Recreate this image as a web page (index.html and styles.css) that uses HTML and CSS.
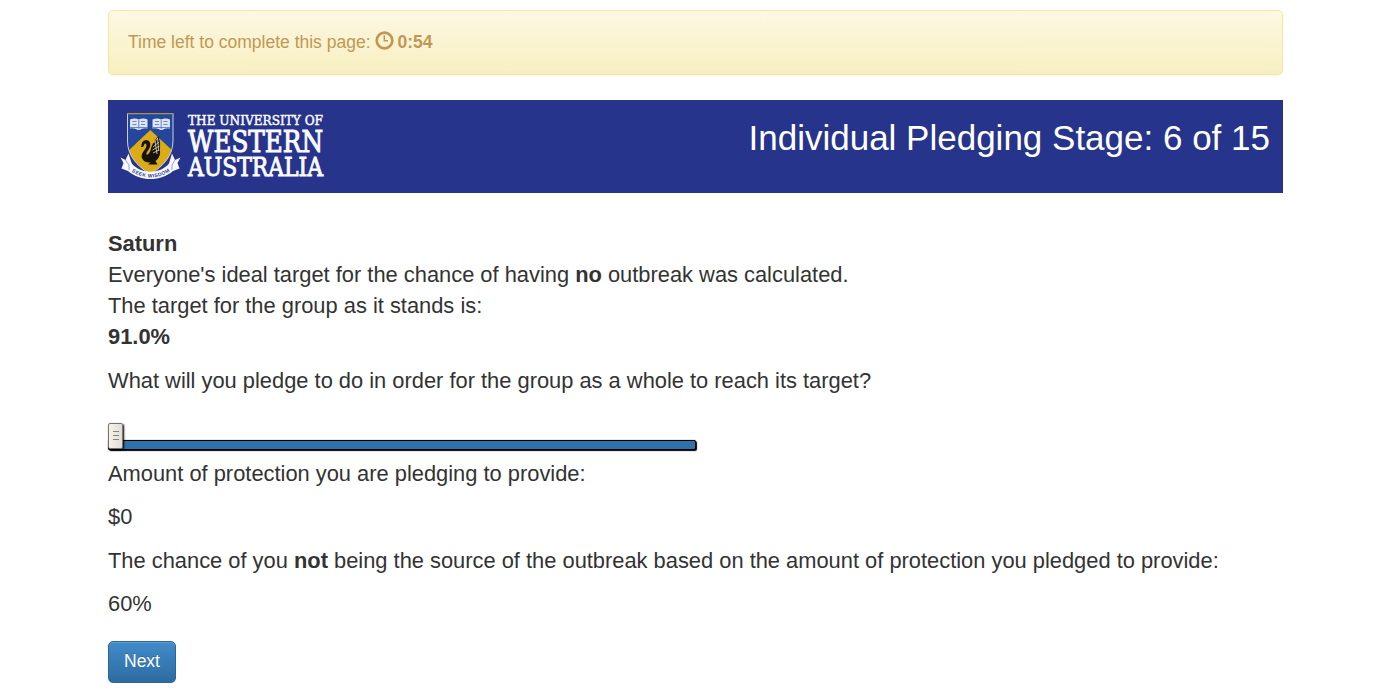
FILE: index.html
```html
<!DOCTYPE html>
<html lang="en">
<head>
<meta charset="utf-8">
<title>Individual Pledging Stage</title>
<link rel="stylesheet" href="styles.css">
</head>
<body>
<main class="container">
  <div class="alert"><span class="alert-text">Time left to complete this page:</span>
    <svg class="clock" width="19" height="19" viewBox="0 0 19 19"><circle cx="9.5" cy="9.5" r="7.8" fill="none" stroke="#c09853" stroke-width="2.7"/><path d="M9.3 4.3V9.8H13" fill="none" stroke="#c09853" stroke-width="1.5"/></svg>
    <b class="time">0:54</b></div>
  <header class="banner">
    <svg class="logo" width="220" height="93" viewBox="0 0 220 93">
      <defs>
        <clipPath id="shield"><path d="M19.5 13.5H65V41C65 55 56 66 42.300 74C28.500 66 19.500 55 19.500 41Z"/></clipPath>
      </defs>
      <g clip-path="url(#shield)">
        <path d="M19 13H66V75H19Z" fill="#24479c"/>
        <path d="M42.300 30L66 52V76H19V52Z" fill="#dbac13"/>
      </g>
      <path d="M19.500 13.500V41C19.500 55 28.500 66 42.300 74C56 66 65 55 65 41V13.500" fill="none" stroke="#c8d0e8"/>
      <path d="M19 13.600H65.500" stroke="#aa9547" stroke-width="1.200"/>
      <g fill="#dce4f6">
        <path d="M22 19.500Q27 17.500 30.800 19.500Q35 17.500 39.500 19.500V28.500Q35 27.500 31.500 30H30Q26 27.500 22 28.500Z"/>
        <path d="M44.500 19.500Q49 17.500 53.200 19.500Q57 17.500 62 19.500V28.500Q58 27.500 54 30H52.500Q49 27.500 44.500 28.500Z"/>
      </g>
      <path d="M22 27.500H40M44.500 27.500H62M30.800 20V29M53.200 20V29M24.500 21.500H28.500M24.500 24.500H28.500M33 21.500H37M33 24.500H37M47 21.500H51M47 24.500H51M55.500 21.500H59.500M55.500 24.500H59.500" stroke="#5270b5" stroke-width=".8"/>
      <path d="M33 47L34 42.800Q35.500 39.800 38.400 40Q43.500 41 42 46.500C41 50 38 52 38.500 54.500C39.500 55.500 41.500 53 42.500 50.500C43 46 45.500 43 47 40L50.500 36Q53 43 52 50Q53 57 47.500 61L49.500 64.500H40L42.500 62.500Q34.500 62.500 33.600 57C33.300 52 38.500 49.500 38.500 45.300Q38.200 42.800 36.700 43.800L35 47Z" fill="#17130b"/>
      <path d="M45.500 43L50 38M45 47L51 42M44.500 50L51.500 46M45 53L51 50M47 41L49 54M49.500 38L50.800 51" stroke="#e9e0c0" stroke-width=".8"/>
      <path d="M20.500 53.500L17.500 60L12.500 57.500L15.500 63L13.500 68.500L20 71C33 81.700 52 81.700 65 71L71.500 68.500L69.500 63L72.500 57.500L67 60L64 53.500L61 63.500C52 74.500 33 74.500 23.800 63.500Z" fill="#f7f8fc"/>
      <path d="M17.500 60L21 65V70M67 60L64 65V70" fill="none" stroke="#8190bd" stroke-width=".8"/>
      <path id="ribbon-line" d="M20.500 69.500Q42.500 85.500 64.500 69.500" fill="none"/>
      <text class="motto" textLength="41" lengthAdjust="spacing"><textPath href="#ribbon-line" startOffset="3.500">SEEK WISDOM</textPath></text>
      <g class="wordmark">
        <text x="80" y="24.800" font-size="13.500" stroke-width=".5" textLength="135" lengthAdjust="spacingAndGlyphs">THE UNIVERSITY OF</text>
        <text x="80" y="52" font-size="30" stroke-width="1.100" textLength="135" lengthAdjust="spacingAndGlyphs">WESTERN</text>
        <text x="80" y="75.500" font-size="25.500" stroke-width="1" textLength="135" lengthAdjust="spacingAndGlyphs">AUSTRALIA</text>
      </g>
    </svg>
    <h1 class="title">Individual Pledging Stage: 6 of 15</h1>
  </header>
  <section class="content">
    <p class="intro"><b>Saturn</b><br><span>Everyone's ideal target for the chance of having <b>no</b> outbreak was calculated.</span><br><span>The target for the group as it stands is:</span><br><b>91.0%</b></p>
    <p><span>What will you pledge to do in order for the group as a whole to reach its target?</span></p>
    <div class="slider"><div class="track"></div><div class="thumb"><i></i><i></i><i></i></div></div>
    <p><span>Amount of protection you are pledging to provide:</span></p>
    <p>$0</p>
    <p><span>The chance of you <b>not</b> being the source of the outbreak based on the amount of protection you pledged to provide:</span></p>
    <p>60%</p>
    <button class="next">Next</button>
  </section>
</main>
</body>
</html>
```
FILE: styles.css
```css
* { box-sizing: border-box; }
body { margin: 0; background: #fff; color: #333; font-family: "Liberation Sans", Arial, sans-serif; font-size: 17.5px; overflow: hidden; }
.container { width: 1175px; margin: 10px 0 0 108px; }
.alert { display: flex; align-items: flex-start; height: 65px; padding: 19px 19px 0; border: 1px solid #f5e79e; border-radius: 5px; background: linear-gradient(#fcf8e3, #f8efc0); color: #c09853; line-height: 25px; box-shadow: 0 1px 2px rgba(0,0,0,.05); text-shadow: 0 1px 0 rgba(255,255,255,.2); }
.alert-text { white-space: nowrap; }
.clock { margin: 1px 4px 0; flex: none; }
.banner { display: flex; justify-content: space-between; height: 93px; margin-top: 25px; background: #27348b; }
.logo { display: block; }
.wordmark { fill: #fafbff; font-family: "DejaVu Serif", serif; stroke: #fafbff; }
.motto { font: bold 5px "Liberation Sans", sans-serif; fill: #27458f; }
.title { margin: 15px 13px 0 0; color: #fff; font-size: 35px; font-weight: 400; line-height: 46px; white-space: nowrap; }
.content { padding-top: 35px; font-size: 21.875px; line-height: 31px; }
.content p { margin: 0 0 12.5px; white-space: nowrap; }
.slider { position: relative; height: 49.5px; padding-top: 31.5px; }
.track { width: 588px; height: 10.5px; background: #3071a9; border: 1px solid #000; border-radius: 2px; box-shadow: 1px 1px 1px #000, 0 0 1px #0d0d0d; }
.thumb { position: absolute; left: 0; top: 14.5px; display: flex; flex-direction: column; align-items: center; justify-content: center; gap: 3px; width: 15px; height: 26px; border-radius: 2px; background: linear-gradient(90deg, #f5f1eb, #e2ddd6); border: 1px solid #77736e; box-shadow: 1px 1px 2px #000; }
.thumb i { width: 6px; height: 1px; background: #88847d; }
.next { display: block; width: 68px; height: 42px; margin-top: 22px; padding: 0 0 2px; border: 1px solid #2b669a; border-radius: 5px; color: #fff; background: linear-gradient(#428bca, #2d6ca2); font: 17.5px "Liberation Sans", Arial, sans-serif; box-shadow: inset 0 1px 0 rgba(255,255,255,.15), 0 1px 1px rgba(0,0,0,.075); text-shadow: 0 -1px 0 rgba(0,0,0,.2); }
```
